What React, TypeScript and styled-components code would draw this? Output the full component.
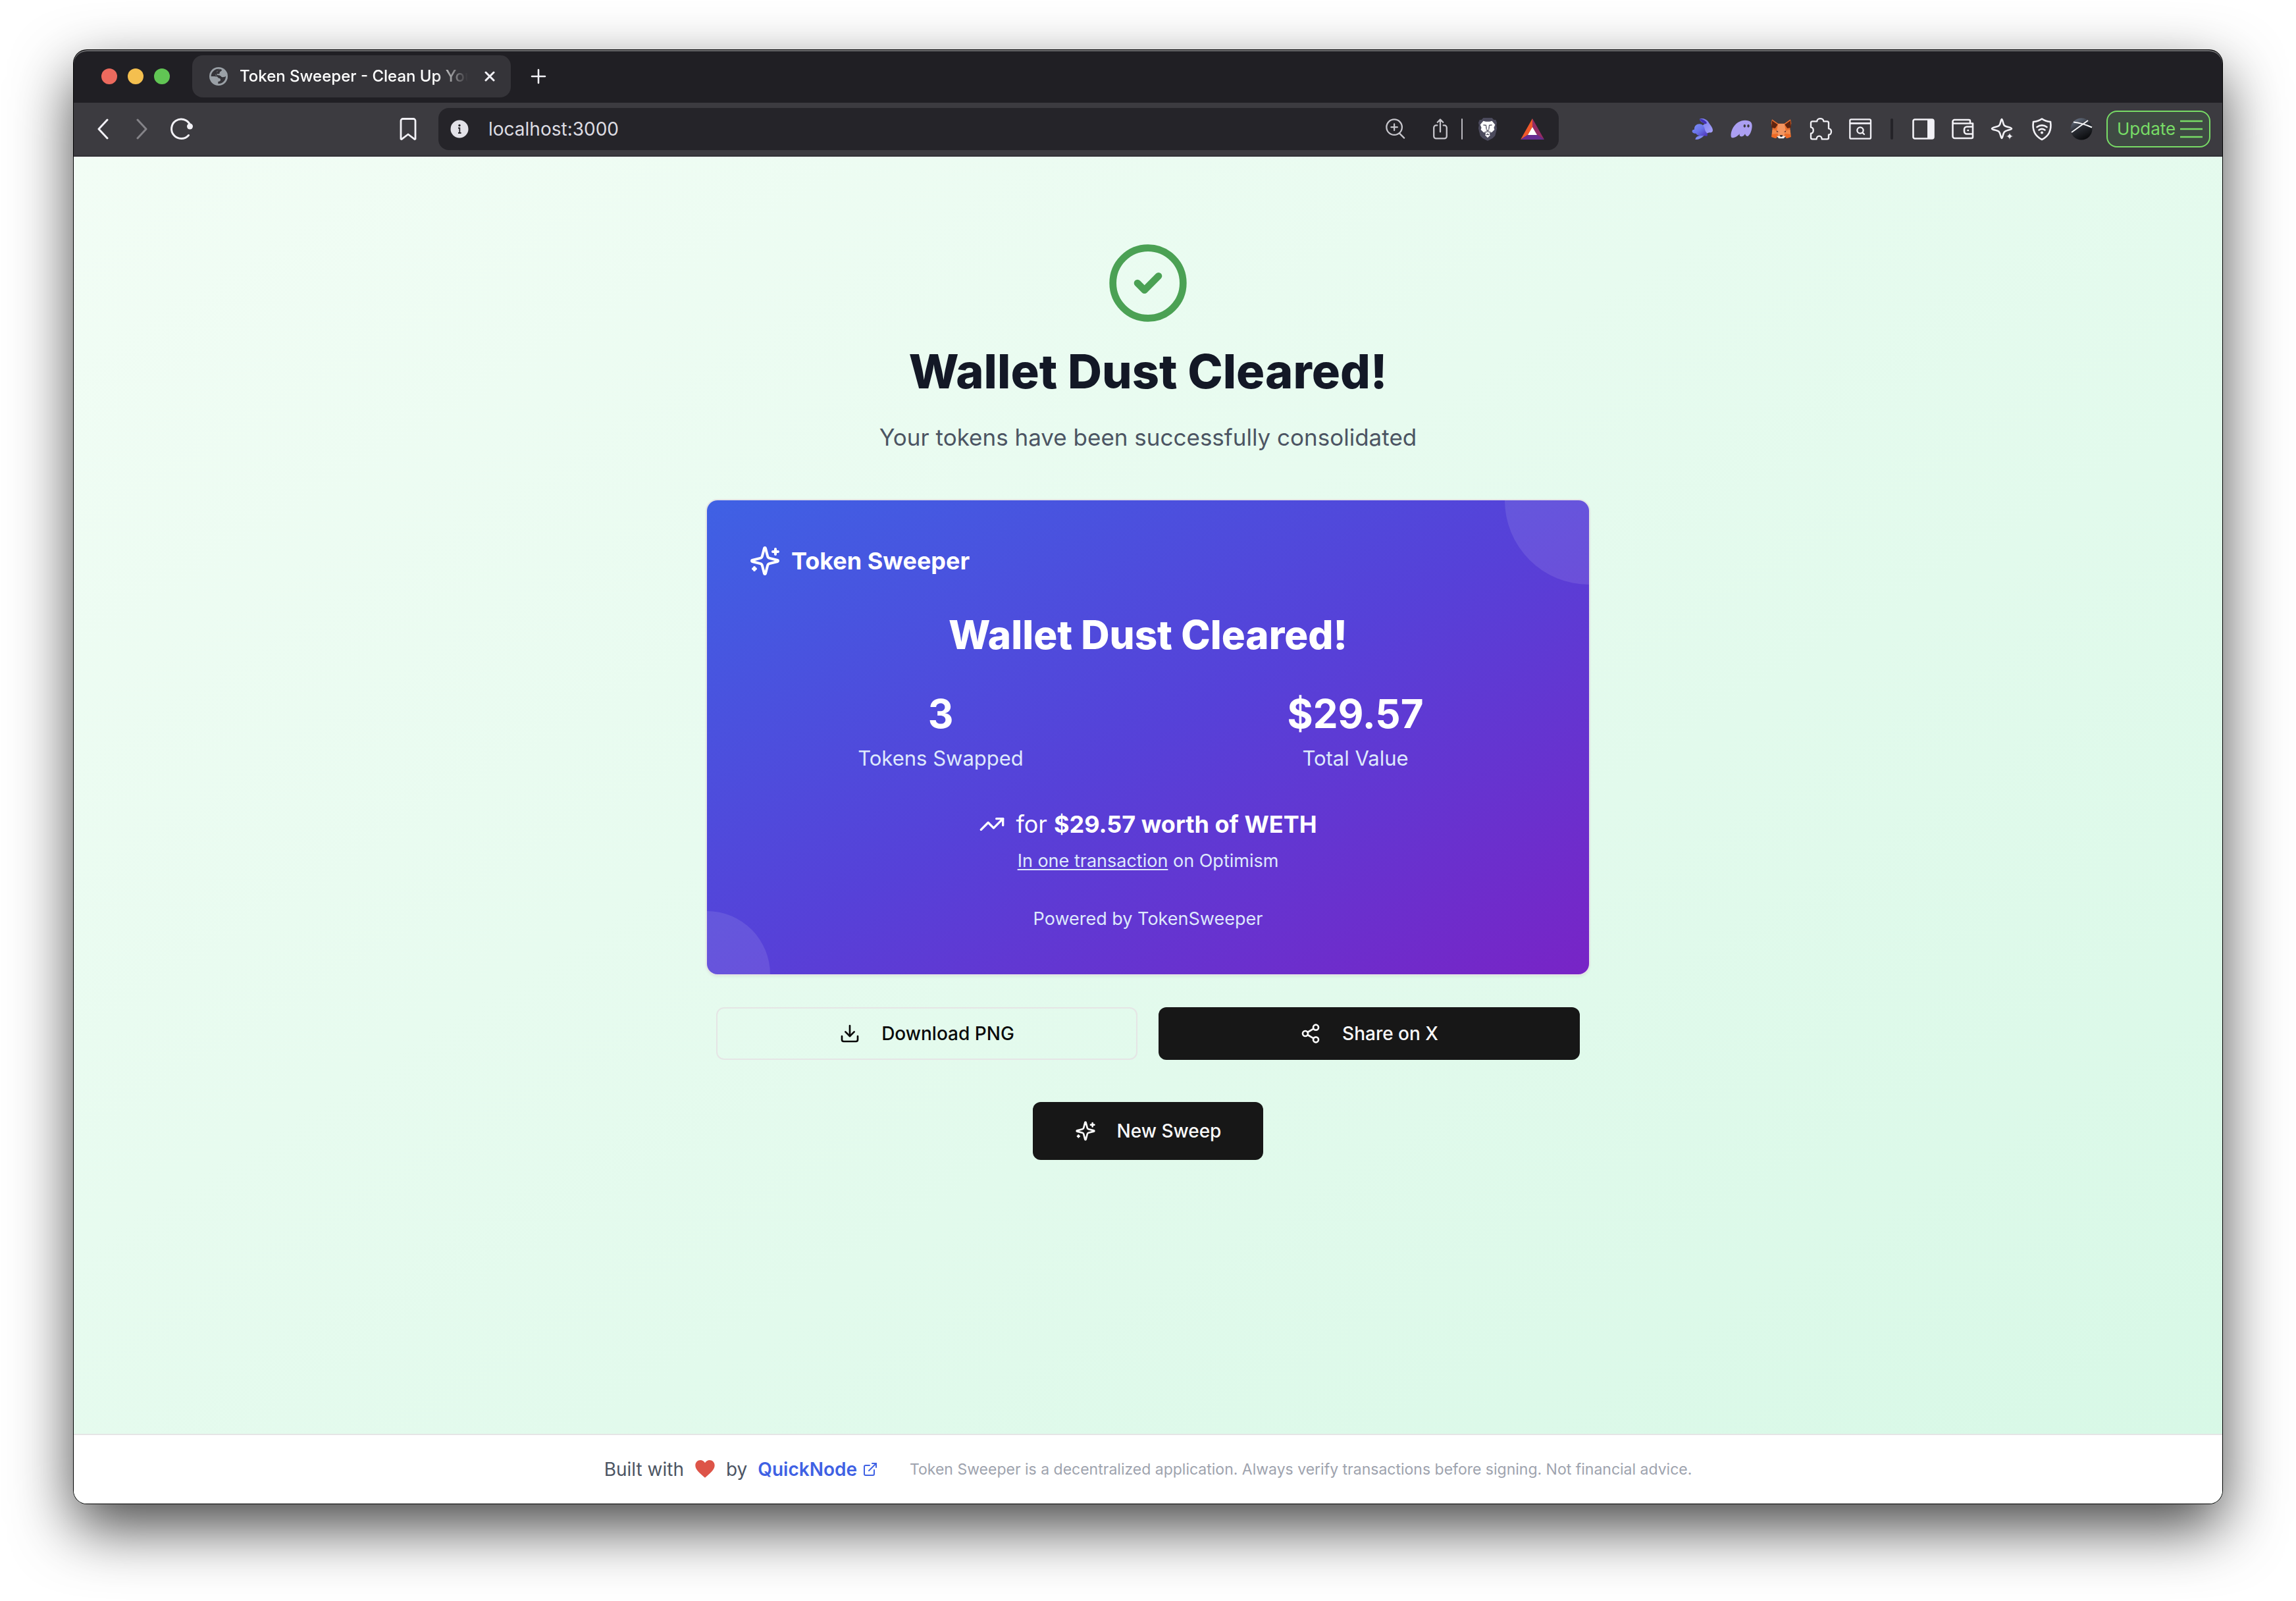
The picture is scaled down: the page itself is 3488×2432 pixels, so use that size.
import React from 'react';
import styled, { createGlobalStyle, css } from 'styled-components';
import { TrendingUp, Download, Share2, ExternalLink } from 'lucide-react';

const GlobalStyle = createGlobalStyle`
  *, *::before, *::after { box-sizing: border-box; }
  body {
    margin: 0;
    background: #ffffff;
    font-family: Inter, "Liberation Sans", sans-serif;
    -webkit-font-smoothing: antialiased;
  }
  h1, h2, p { margin: 0; }
  button, input { font-family: inherit; }
  svg { display: block; flex-shrink: 0; }
`;

/* ---------- browser frame ---------- */

const Desktop = styled.div`
  display: flex;
  min-height: 100vh;
  padding: 76px 112px 148px;
  overflow: hidden;
`;

const Window = styled.div`
  flex: 1;
  display: flex;
  flex-direction: column;
  overflow: hidden;
  border-radius: 20px;
  background: #202024;
  box-shadow: 0 0 0 1px #000000, 0 36px 92px rgba(0, 0, 0, 0.72);
`;

const TabStrip = styled.header`
  display: flex;
  align-items: center;
  height: 80px;
  padding-left: 42px;
  background: #201f24;
  box-shadow: inset 0 2px 0 #6c6c6f;
  border-radius: 20px 20px 0 0;
`;

const WindowControls = styled.div`
  display: flex;
  gap: 16px;
  margin-right: 34px;
`;

const Light = styled.button<{ $color: string }>`
  width: 24px;
  height: 24px;
  padding: 0;
  border: 0;
  border-radius: 50%;
  background: ${(p) => p.$color};
`;

const Tab = styled.div`
  display: flex;
  align-items: center;
  width: 484px;
  height: 64px;
  padding: 0 18px 0 26px;
  border-radius: 16px;
  background: #353439;
  color: #ffffff;
`;

const TabTitle = styled.span`
  flex: 1;
  margin: 0 12px 0 18px;
  overflow: hidden;
  white-space: nowrap;
  font-size: 24px;
  font-weight: 500;
  line-height: 32px;
  mask-image: linear-gradient(90deg, #000 84%, transparent 98%);
`;

const IconButton = styled.button<{ $size?: number }>`
  display: flex;
  align-items: center;
  justify-content: center;
  flex-shrink: 0;
  width: ${(p) => p.$size ?? 60}px;
  height: ${(p) => p.$size ?? 60}px;
  padding: 0;
  border: 0;
  background: none;
  color: #f2f1f6;

  &:disabled { color: #848388; }
`;

const NewTab = styled(IconButton)`
  margin-left: 12px;
`;

const AddressAction = styled(IconButton)`
  width: 68px;
  color: #c6c5cb;
`;

const Toolbar = styled.nav`
  display: flex;
  align-items: center;
  height: 82px;
  padding: 0 18px 0 14px;
  background: #3c3b40;
  border-bottom: 2px solid #323136;
`;

const Group = styled.div`
  display: flex;
  align-items: center;
`;

const BookmarkSlot = styled.div`
  margin: 0 16px 0 284px;
`;

const AddressBar = styled.form`
  flex: 1;
  display: flex;
  align-items: center;
  height: 64px;
  margin-right: 188px;
  padding: 0 6px 0 18px;
  border-radius: 16px;
  background: #252429;
`;

const AddressInput = styled.input`
  flex: 1;
  min-width: 0;
  margin-left: 30px;
  padding: 0;
  border: 0;
  outline: 0;
  background: none;
  color: #dddce2;
  font-size: 28px;
  line-height: 40px;
`;

const Rule = styled.span<{ $tone: 'light' | 'dark' }>`
  width: ${(p) => (p.$tone === 'light' ? 2 : 4)}px;
  height: 32px;
  border-radius: 2px;
  ${(p) =>
    p.$tone === 'light'
      ? css`background: #b9b8be; margin: 0 4px 0 -2px;`
      : css`background: #242328; margin: 0 16px;`}
`;

const UpdateButton = styled.button`
  display: flex;
  align-items: center;
  justify-content: space-between;
  width: 158px;
  height: 56px;
  margin-left: 8px;
  padding: 0 10px 0 14px;
  border: 2px solid #78dc66;
  border-radius: 16px;
  background: #3f4a43;
  color: #78dc66;
  font-size: 26px;
  line-height: 32px;
`;

/* ---------- page ---------- */

const Page = styled.div`
  flex: 1;
  display: flex;
  flex-direction: column;
  background: linear-gradient(to bottom right, #f2fdf5, #d7f8e6);
`;

const Main = styled.main`
  flex: 1;
  display: flex;
  flex-direction: column;
  align-items: center;
  width: 100%;
  max-width: 1344px;
  margin: 0 auto;
  padding: 128px 0;
`;

const PageTitle = styled.h1`
  margin-top: 30px;
  color: #131826;
  font-size: 72px;
  font-weight: 800;
  line-height: 80px;
`;

const Subtitle = styled.p`
  margin: 32px 0 66px;
  color: #4c5563;
  font-size: 35px;
  line-height: 56px;
`;

const CardFrame = styled.div`
  width: 100%;
  padding: 2px;
`;

const Card = styled.section`
  position: relative;
  display: flex;
  flex-direction: column;
  align-items: center;
  width: 100%;
  padding: 64px;
  overflow: hidden;
  border-radius: 16px;
  background: linear-gradient(to bottom right, #3f61e4, #5641d8, #7824c6);
  color: #ffffff;
  box-shadow: 0 0 0 2px #e5e5e5, 0 3px 5px rgba(0, 0, 0, 0.08);
`;

const Orb = styled.span<{ $corner: 'top' | 'bottom' }>`
  position: absolute;
  border-radius: 50%;
  background: rgba(255, 255, 255, 0.1);
  ${(p) =>
    p.$corner === 'top'
      ? css`top: -128px; right: -128px; width: 256px; height: 256px;`
      : css`bottom: -96px; left: -96px; width: 192px; height: 192px;`}
`;

const Brand = styled.div`
  display: flex;
  align-items: center;
  align-self: flex-start;
  gap: 16px;
  font-size: 36px;
  font-weight: 700;
  line-height: 56px;
`;

const CardTitle = styled.h2`
  margin-top: 48px;
  font-size: 60px;
  font-weight: 800;
  line-height: 72px;
`;

const Stats = styled.div`
  display: grid;
  grid-template-columns: 1fr 1fr;
  gap: 48px;
  width: 100%;
  margin: 48px 0;
  text-align: center;
`;

const StatValue = styled.p`
  font-size: 60px;
  font-weight: 700;
  line-height: 72px;
`;

const StatLabel = styled.p`
  margin-top: 8px;
  color: #dee9fc;
  font-size: 31px;
  line-height: 48px;
`;

const Summary = styled.div`
  display: flex;
  align-items: center;
  gap: 16px;
  font-size: 36px;
  line-height: 56px;
`;

const Note = styled.p<{ $gap: number }>`
  margin-top: ${(p) => p.$gap}px;
  color: #dee9fc;
  font-size: 27px;
  line-height: 40px;
`;

const TxLink = styled.a`
  color: inherit;
  text-decoration: underline;
  text-decoration-thickness: 2px;
  text-underline-offset: 3px;
`;

const Actions = styled.div`
  display: grid;
  grid-template-columns: 1fr 1fr;
  gap: 32px;
  width: 100%;
  margin: 48px 0 64px;
  padding: 0 16px;
`;

const Button = styled.button<{ $variant: 'outline' | 'solid'; $large?: boolean }>`
  display: flex;
  align-items: center;
  justify-content: center;
  gap: 32px;
  height: ${(p) => (p.$large ? 88 : 80)}px;
  padding: 0 64px;
  border-radius: 12px;
  font-size: 28px;
  font-weight: 500;
  line-height: 40px;
  ${(p) =>
    p.$variant === 'outline'
      ? css`border: 2px solid #e5e5e5; background: transparent; color: #0a0a0a;`
      : css`border: 0; background: #171717; color: #fafafa;`}
`;

const Footer = styled.footer`
  display: flex;
  align-items: center;
  justify-content: center;
  gap: 48px;
  padding: 32px;
  border-top: 2px solid #e5e5e5;
  background: #ffffff;
`;

const Credit = styled.p`
  display: flex;
  align-items: center;
  gap: 16px;
  color: #4c5563;
  font-size: 28px;
  line-height: 40px;
`;

const CreditLink = styled.a`
  display: flex;
  align-items: center;
  gap: 8px;
  color: #3f61e4;
  font-weight: 600;
  text-decoration: none;
`;

const Disclaimer = styled.p`
  color: #9ea3ae;
  font-size: 23px;
  line-height: 32px;
`;

/* ---------- drawings ---------- */

const line = { fill: 'none', stroke: 'currentColor', strokeLinecap: 'round', strokeLinejoin: 'round' } as const;

const Globe = () => (
  <svg width="28" height="28" viewBox="0 0 84 84">
    <circle cx="42" cy="42" r="42" fill="#9aa0a6" />
    <path
      d="M8 42a34 34 0 0 1 39-33.6v5c-6 2-12 3-12 10 0 5-8 4-8 9 0 3 1 6 5 6h15c3 0 4 3 4 5 5 0 8 1 10 3 4-3 8-2 14-5A34 34 0 0 1 40 76V66c6 0 11-2 11-8 0-5-2-8-8-8-4 0-4-6-9-7-6-1-17-1-26-1z"
      fill="#353439"
    />
    <path d="M46 8c-4 4-2 8-8 9-6 2-3 8-5 12 4 2 1 7 12 6 5-1 8 5 6 9 8 1 16 3 23-2A34 34 0 0 0 46 8z" fill="#9aa0a6" />
    <path d="M47 9a34 34 0 0 1 10 3c0 8-10 7-10 14 0 3-2 5-4 5h-9c-1 4 3 5 6 6 8 1 14 4 16 8-6 0-10-1-12-3-3-4-9-2-14-6-5-3-4-11 3-13 6-1 3-8 8-9 4-1 4-3 6-5z" fill="#353439" />
  </svg>
);

const Close = () => (
  <svg width="16" height="16" viewBox="0 0 16 16" {...line} strokeWidth="3">
    <path d="M2 2l12 12M14 2L2 14" />
  </svg>
);

const Plus = () => (
  <svg width="24" height="24" viewBox="0 0 24 24" {...line} strokeWidth="2.6">
    <path d="M12 2v20M2 12h20" />
  </svg>
);

const Chevron = ({ flip }: { flip?: boolean }) => (
  <svg width="18" height="32" viewBox="0 0 18 32" {...line} strokeWidth="3">
    <path d={flip ? 'M2 2l13 14L2 30' : 'M16 2L3 16l13 14'} />
  </svg>
);

const Reload = () => (
  <svg width="36" height="36" viewBox="0 0 36 36" {...line} strokeWidth="3">
    <path d="M28.5 27.5A14.8 14.8 0 1 1 30.5 11" />
    <circle cx="30.5" cy="14" r="4.5" fill="currentColor" stroke="none" />
  </svg>
);

const Bookmark = () => (
  <svg width="28" height="36" viewBox="0 0 28 36" {...line} strokeWidth="2.8">
    <path d="M3 5.5a3 3 0 0 1 3-3h16a3 3 0 0 1 3 3V33l-1 .6L14 26l-10 7.6-1-.6z" />
  </svg>
);

const Info = () => (
  <svg width="28" height="28" viewBox="0 0 28 28">
    <circle cx="14" cy="14" r="13.5" fill="#e3e2e8" />
    <circle cx="14" cy="8.5" r="1.7" fill="#252429" />
    <path d="M12 12.500h2.300v7M12 20h4.600" stroke="#252429" strokeWidth="1.800" fill="none" />
  </svg>
);

const ZoomIn = () => (
  <svg width="32" height="34" viewBox="0 0 34 36" {...line} strokeWidth="2.4">
    <circle cx="15" cy="15" r="12.5" />
    <path d="M15 10v10M10 15h10M23.500 25L31 32.500" />
  </svg>
);

const Share = () => (
  <svg width="24" height="34" viewBox="0 0 28 40" {...line} strokeWidth="2.7">
    <path d="M8.500 13.500H6.500a4 4 0 0 0-4 4V33a4 4 0 0 0 4 4h15a4 4 0 0 0 4-4V17.500a4 4 0 0 0-4-4h-2M14 25V3M9 8l5-5 5 5" />
  </svg>
);

const Lion = () => (
  <svg width="32" height="38" viewBox="0 0 34 38">
    <path d="M10 1h14l3 3 3 0 2 5-1 4 1 5-3 12-4 4-8 4-8-4-4-4L2 18l1-5-1-4 2-5h3z" fill="#4b4a5c" />
    <path d="M10 6l4 1h6l4-1 5 6-2 5 1 3-4 4-3 1-1 2 1 2-4 4-4-4 1-2-1-2-3-1-4-4 1-3-2-5z" fill="#ffffff" />
    <path d="M10 12.500l5 .5M24 12.500l-5 .5M14.500 14l.5 5M19.500 14l-.5 5M14.500 20l2.500 1.500 2.500-1.500M12 24.500l5-1.500 5 1.500M15 28.500l2-1.500 2 1.500" fill="none" stroke="#3b3a4c" strokeWidth="1.300" />
  </svg>
);

const Triangle = () => (
  <svg width="36" height="34" viewBox="0 0 36 34">
    <path d="M18 1v14l-7 11L0 33z" fill="#f1592b" />
    <path d="M18 1v14l7 11 11 7z" fill="#942b64" />
    <path d="M0 33l11-7.500h14L36 33z" fill="#662d91" />
    <path d="M18 14l7 12H11z" fill="#ffffff" />
  </svg>
);

const Rabbit = () => (
  <svg width="36" height="36" viewBox="24 36 108 108">
    <defs>
      <linearGradient id="rabbitBody" x1="0" y1="0" x2="1" y2="1">
        <stop offset="0" stopColor="#7d8ff5" />
        <stop offset="0.5" stopColor="#6a74ea" />
        <stop offset="1" stopColor="#4a2fb8" />
      </linearGradient>
      <linearGradient id="rabbitHead" x1="0" y1="0" x2="1" y2="1">
        <stop offset="0" stopColor="#7479ee" />
        <stop offset="1" stopColor="#a8a2fa" />
      </linearGradient>
    </defs>
    <path d="M46 137c2-10 10-15 22-17h18c-12 12-24 18-36 18z" fill="#7f8af2" />
    <path d="M66 44c14-5 32 1 40 14 6 12 20 24 20 38 0 8-6 11-16 10l-12 4-18-20c-6-10 0-20 12-24-12-4-26-12-26-22z" fill="url(#rabbitHead)" />
    <path d="M66 44c2 10 14 17 26 23 7 0 8-5 4-10-6-7-16-13-30-13z" fill="#4130b4" />
    <path d="M42 92c-2-24 26-32 40-18 9 9 6 22 14 30 3 6 8 8 6 14 0 6-8 5-14 3-12 0-32 2-39-11-10 1-18-4-17-11 1-5 5-7 10-7z" fill="url(#rabbitBody)" />
  </svg>
);

const Ghost = () => (
  <svg width="36" height="36" viewBox="205 36 108 108">
    <path
      d="M210 122c-2-26 18-70 64-72 26 0 32 12 32 26 0 20-10 42-18 46-8 4-12-4-14-10-4 8-10 13-18 12-8-1-7-8-7-12-7 10-21 18-31 18-6 0-8-4-8-8z"
      fill="#ab9ff2"
    />
    <ellipse cx="272" cy="76" rx="5" ry="7" fill="#3c3b40" />
    <ellipse cx="289" cy="76" rx="5" ry="7" fill="#3c3b40" />
  </svg>
);

const Fox = () => (
  <svg width="36" height="36" viewBox="384 36 108 108">
    <path d="M396 46l28 19h28l28-19 4 18-6 24 5 38-19 7-8-8h-36l-8 8-19-7 5-38-6-24z" fill="#ea6f2e" />
    <path d="M424 66h28l6 30-8 28h-24l-8-28z" fill="#f39560" />
    <path d="M396 52l26 18-12 17-17-4zM480 52l-26 18 12 17 17-4z" fill="#5f2410" />
    <path d="M398 92l20 6 6 14-28 2zM478 92l-20 6-6 14 28 2z" fill="#f08a4c" />
    <path d="M396 114l26-2-6 19-20-5zM480 114l-26-2 6 19 20-5z" fill="#ee6a26" />
    <path d="M418 122h40l-9 11h-22z" fill="#f1efee" />
    <path d="M431 118h14l-3 7h-8z" fill="#2b2326" />
    <path d="M416 97l10 6-8 1zM460 97l-10 6 8 1z" fill="#4a2b2a" />
  </svg>
);

const Puzzle = () => (
  <svg width="36" height="36" viewBox="567 32 108 108" {...line} strokeWidth="7">
    <path d="M583 51h21c0-17 30-17 30 0h16q7 0 7 7v26c16 0 16 28 0 28v13q0 7-7 7h-24c0-19-24-19-24 0h-19q-7 0-7-7v-19c15 0 15-28 0-28V58q0-7 7-7z" />
  </svg>
);

const PageSearch = () => (
  <svg width="36" height="36" viewBox="744 36 108 108" {...line} strokeWidth="7">
    <rect x="751" y="46" width="95" height="88" rx="6" />
    <path d="M753 64h91" strokeWidth="8" />
    <circle cx="798" cy="96" r="14" />
    <path d="M808 106l8 8" />
  </svg>
);

const SidePanel = () => (
  <svg width="36" height="36" viewBox="0 0 36 36">
    <rect x="2.5" y="3.5" width="31" height="29" rx="2.5" fill="none" stroke="currentColor" strokeWidth="2.6" />
    <path d="M24 3h7.500a2 2 0 0 1 2 2v26a2 2 0 0 1-2 2H24z" fill="currentColor" />
  </svg>
);

const Wallet = () => (
  <svg width="36" height="36" viewBox="0 0 36 36" {...line} strokeWidth="2.6">
    <path d="M33 14V9.500H4.500a2 2 0 0 1-2-2M2.500 7.500A3 3 0 0 1 5 4h22a2 2 0 0 1 2 2v3M2.500 7v22a3 3 0 0 0 3 3H31a2 2 0 0 0 2-2V9.500M33 14.500H24a4 4 0 0 0-4 4v3a4 4 0 0 0 4 4h9M25.500 20h.5" />
  </svg>
);

const Assistant = () => (
  <svg width="36" height="36" viewBox="0 0 36 36" {...line} strokeWidth="2.6">
    <path d="M17 3c1.500 0 1.700 7.500 4 9.700S32 15.500 32 17.500s-8.500 2-11 4.800-2.500 9.700-4 9.700-1.700-7-4-9.700S2 19.500 2 17.500s8.500-2.600 11-4.800S15.500 3 17 3z" />
    <path d="M29 22.500c.8 4.600 1.800 5.700 6.500 6.500-4.700.8-5.700 1.800-6.500 6.500-.8-4.700-1.800-5.700-6.500-6.500 4.700-.8 5.700-1.900 6.500-6.500z" fill="currentColor" stroke="#3c3b40" strokeWidth="0.800" />
  </svg>
);

const Vpn = () => (
  <svg width="36" height="36" viewBox="0 0 36 36" {...line} strokeWidth="2.6">
    <path d="M18 2.500c4 3 8 4 13 4.500 1.500 10-1 21-13 27C6 28 3.500 17 5 7c5-.5 9-1.500 13-4.500z" />
    <path d="M10.500 15c4.500-3.500 10.500-3.500 15 0M13.500 19.500c3-2.200 6-2.200 9 0" />
    <circle cx="18" cy="23.500" r="2" fill="currentColor" stroke="none" />
  </svg>
);

const Avatar = () => (
  <svg width="34" height="34" viewBox="0 0 34 34">
    <defs>
      <linearGradient id="orbFill" x1="0.2" y1="0" x2="0.7" y2="1">
        <stop offset="0" stopColor="#6b7688" />
        <stop offset="0.45" stopColor="#2b2e35" />
        <stop offset="1" stopColor="#08090b" />
      </linearGradient>
    </defs>
    <circle cx="17" cy="17" r="16.5" fill="url(#orbFill)" />
    <path d="M2 22L27 4M5 6.500c10 1 19 4 28 8" stroke="#f4f5f7" strokeWidth="2" fill="none" />
  </svg>
);

const MenuLines = () => (
  <svg width="34" height="28" viewBox="0 0 34 28" stroke="currentColor" strokeWidth="2.6">
    <path d="M0 2h34M0 14h34M0 26h34" />
  </svg>
);

const CheckBadge = () => (
  <svg width="128" height="128" viewBox="0 0 24 24" {...line} stroke="#4ba154" strokeWidth="2">
    <circle cx="12" cy="12" r="10" />
    <path d="M9 12l2 2 4-4" />
  </svg>
);

const Sparkle = ({ size }: { size: number }) => (
  <svg width={size} height={size} viewBox="0 0 24 24" {...line} strokeWidth="2">
    <path d="M9.937 15.5A2 2 0 0 0 8.5 14.063l-6.135-1.582a.5.5 0 0 1 0-.962L8.5 9.936A2 2 0 0 0 9.937 8.5l1.582-6.135a.5.5 0 0 1 .963 0L14.063 8.5A2 2 0 0 0 15.5 9.937l6.135 1.581a.5.5 0 0 1 0 .964L15.5 14.063a2 2 0 0 0-1.437 1.437l-1.582 6.135a.5.5 0 0 1-.963 0z" />
    <path d="M20 3v4M22 5h-4M4 17v2M5 18H3" />
  </svg>
);

const HeartMark = () => (
  <svg width="32" height="32" viewBox="0 0 24 24" fill="#dd5448">
    <path d="M12 21.500C6 16.500 1 12.500 1 7.500 1 4 3.600 1.500 6.800 1.500c2.200 0 4.200 1.200 5.200 3.200 1-2 3-3.200 5.200-3.200C20.400 1.500 23 4 23 7.500c0 5-5 9-11 14z" />
  </svg>
);

const extensions = [
  { label: 'Rabby', Icon: Rabbit },
  { label: 'Phantom', Icon: Ghost },
  { label: 'MetaMask', Icon: Fox },
  { label: 'Extensions', Icon: Puzzle },
  { label: 'Search tabs', Icon: PageSearch },
];

const browserTools = [
  { label: 'Side panel', Icon: SidePanel },
  { label: 'Wallet', Icon: Wallet },
  { label: 'Assistant', Icon: Assistant },
  { label: 'VPN', Icon: Vpn },
  { label: 'Profile', Icon: Avatar },
];

const stats = [
  { value: '3', label: 'Tokens Swapped' },
  { value: '$29.57', label: 'Total Value' },
];

export default function App() {
  return (
    <>
      <GlobalStyle />
      <Desktop>
        <Window>
          <TabStrip>
            <WindowControls>
              <Light $color="#ec6a5e" aria-label="Close window" />
              <Light $color="#f4bf4f" aria-label="Minimise window" />
              <Light $color="#61c554" aria-label="Zoom window" />
            </WindowControls>
            <Tab>
              <Globe />
              <TabTitle>Token Sweeper - Clean Up You</TabTitle>
              <IconButton $size={28} aria-label="Close tab"><Close /></IconButton>
            </Tab>
            <NewTab aria-label="New tab"><Plus /></NewTab>
          </TabStrip>

          <Toolbar>
            <Group>
              <IconButton aria-label="Back"><Chevron /></IconButton>
              <IconButton aria-label="Forward" disabled><Chevron flip /></IconButton>
              <IconButton aria-label="Reload"><Reload /></IconButton>
            </Group>
            <BookmarkSlot>
              <IconButton aria-label="Bookmark"><Bookmark /></IconButton>
            </BookmarkSlot>
            <AddressBar>
              <Info />
              <AddressInput type="text" aria-label="Address" defaultValue="localhost:3000" />
              <AddressAction type="button" aria-label="Zoom"><ZoomIn /></AddressAction>
              <AddressAction type="button" aria-label="Share"><Share /></AddressAction>
              <Rule $tone="light" />
              <AddressAction type="button" aria-label="Shields"><Lion /></AddressAction>
              <AddressAction type="button" aria-label="Rewards"><Triangle /></AddressAction>
            </AddressBar>
            <Group>
              {extensions.map(({ label, Icon }) => (
                <IconButton key={label} aria-label={label}><Icon /></IconButton>
              ))}
              <Rule $tone="dark" />
              {browserTools.map(({ label, Icon }) => (
                <IconButton key={label} aria-label={label}><Icon /></IconButton>
              ))}
            </Group>
            <UpdateButton>
              Update
              <MenuLines />
            </UpdateButton>
          </Toolbar>

          <Page>
            <Main>
              <CheckBadge />
              <PageTitle>Wallet Dust Cleared!</PageTitle>
              <Subtitle>Your tokens have been successfully consolidated</Subtitle>

              <CardFrame>
                <Card>
                  <Orb $corner="top" />
                  <Orb $corner="bottom" />
                  <Brand>
                    <Sparkle size={48} />
                    Token Sweeper
                  </Brand>
                  <CardTitle>Wallet Dust Cleared!</CardTitle>
                  <Stats>
                    {stats.map((s) => (
                      <div key={s.label}>
                        <StatValue>{s.value}</StatValue>
                        <StatLabel>{s.label}</StatLabel>
                      </div>
                    ))}
                  </Stats>
                  <Summary>
                    <TrendingUp size={40} />
                    <p>for <strong>$29.57 worth of WETH</strong></p>
                  </Summary>
                  <Note $gap={8}>
                    <TxLink href="#transaction">In one transaction</TxLink> on Optimism
                  </Note>
                  <Note $gap={48}>Powered by TokenSweeper</Note>
                </Card>
              </CardFrame>

              <Actions>
                <Button $variant="outline"><Download size={32} />Download PNG</Button>
                <Button $variant="solid"><Share2 size={32} />Share on X</Button>
              </Actions>
              <Button $variant="solid" $large><Sparkle size={32} />New Sweep</Button>
            </Main>

            <Footer>
              <Credit>
                Built with
                <HeartMark />
                by
                <CreditLink href="#quicknode">QuickNode<ExternalLink size={24} /></CreditLink>
              </Credit>
              <Disclaimer>
                Token Sweeper is a decentralized application. Always verify transactions before signing. Not financial advice.
              </Disclaimer>
            </Footer>
          </Page>
        </Window>
      </Desktop>
    </>
  );
}
